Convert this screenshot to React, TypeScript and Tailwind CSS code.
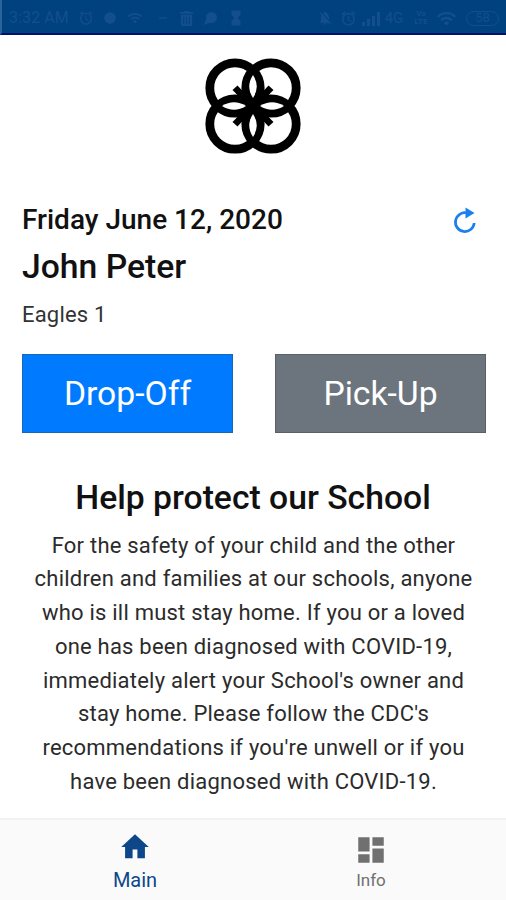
import React from 'react';
import { FaTrashAlt } from 'react-icons/fa';
import {
  MdAccessAlarm,
  MdBrightness1,
  MdDashboard,
  MdHourglassFull,
  MdNotificationsOff,
  MdWifi,
} from 'react-icons/md';

const notice = [
  'For the safety of your child and the other',
  'children and families at our schools, anyone',
  'who is ill must stay home. If you or a loved',
  'one has been diagnosed with COVID-19,',
  "immediately alert your School's owner and",
  "stay home. Please follow the CDC's",
  "recommendations if you're unwell or if you",
  'have been diagnosed with COVID-19.',
];

function StatusBar() {
  return (
    <div className="flex h-[35px] shrink-0 items-center justify-between border-b-2 border-l-2 border-b-[#00106b] border-l-[#2a649b] bg-[#00427f] pl-[7px] pr-[7px] pt-[3px] text-[#134f8c]">
      <div className="flex items-center">
        <span className="w-[69px] whitespace-nowrap text-[16px] tracking-[0.1px]">3:32 AM</span>
        <MdAccessAlarm className="h-4 w-4" />
        <MdBrightness1 className="ml-[9px] h-3.5 w-3.5" />
        <MdWifi className="ml-[10px] h-4 w-4" />
        <span className="ml-4 h-[2px] w-2 bg-[#0b4a87]" />
        <FaTrashAlt className="ml-[12px] h-[15px] w-[15px]" />
        <svg className="ml-[9px] h-[15px] w-[15px]" viewBox="0 0 15 15" fill="currentColor">
          <circle cx="8.5" cy="6.5" r="5.5" />
          <path d="M3 8L1 14L8 11Z" />
        </svg>
        <MdHourglassFull className="ml-[9px] h-[18px] w-[18px]" />
      </div>
      <div className="flex items-center">
        <MdNotificationsOff className="h-4 w-4" />
        <MdAccessAlarm className="ml-[7px] h-[17px] w-[17px]" />
        <svg className="ml-[4px] h-[15px] w-[20px]" viewBox="0 0 20 15" fill="currentColor">
          <path d="M1 11h3v4H1zM6 8h3v7H6zM11 5h3v10h-3zM16 1h3v14h-3z" />
        </svg>
        <span className="w-[26px] text-center text-[15px]">4G</span>
        <span className="ml-1 flex w-5 flex-col items-center text-[8px] font-bold">
          <span className="h-2 leading-[8px]">Vo</span>
          <span className="h-2 leading-[8px]">LTE</span>
        </span>
        <MdWifi className="ml-[5px] h-[21px] w-[21px]" />
        <span className="ml-[9px] flex h-[15px] w-[33px] items-center justify-center rounded-full border border-[#134f8c] text-[13px]">
          58
        </span>
      </div>
    </div>
  );
}

function Logo() {
  return (
    <svg className="h-24 w-24" viewBox="0 0 96 96" fill="none" stroke="#000">
      <g strokeWidth="8.8">
        <circle cx="30" cy="30" r="25.2" />
        <circle cx="66" cy="30" r="25.2" />
        <circle cx="30" cy="66" r="25.2" />
        <circle cx="66" cy="66" r="25.2" />
      </g>
      <path d="M33 33L63 63M63 33L33 63" strokeWidth="6" />
      <g fill="#000" stroke="none">
        <path d="M35.5 35.5H60.5V60.5H35.5Z" />
        <path d="M27.5 32L32.5 27.5L38 33.5L33.5 38Z" />
        <path d="M68.5 32L63.5 27.5L58 33.5L62.5 38Z" />
        <path d="M27.5 64L32.5 68.5L38 62.5L33.5 58Z" />
        <path d="M68.5 64L63.5 68.5L58 62.5L62.5 58Z" />
      </g>
      <g fill="#fff" stroke="none">
        <path d="M48 17Q55.5 28.5 48 40Q40.5 28.5 48 17Z" />
        <path d="M48 56Q55.5 67.5 48 79Q40.5 67.5 48 56Z" />
        <path d="M17 48Q29 40.5 41 48Q29 55.5 17 48Z" />
        <path d="M55 48Q67 40.5 79 48Q67 55.5 55 48Z" />
      </g>
    </svg>
  );
}

function RefreshIcon() {
  return (
    <svg className="h-7 w-7" viewBox="0 0 28 28" fill="none">
      <path d="M16 7A9.4 9.4 0 1 0 23.2 17" stroke="#1b80ee" strokeWidth="2.7" />
      <path d="M14.5 1.5L23.5 7L14.5 12.5Z" fill="#1b80ee" />
    </svg>
  );
}

function HomeIcon() {
  return (
    <svg className="h-[34px] w-[34px]" viewBox="0 0 24 24" fill="currentColor">
      <path d="M12 3L2.3 12H5v8h5.3v-6.3h3.4V20H19v-8h2.7Z" />
    </svg>
  );
}

export default function App() {
  return (
    <div className="flex h-[900px] w-[506px] flex-col overflow-hidden bg-white font-['Roboto',sans-serif] text-[#111]">
      <StatusBar />

      <main className="flex flex-1 flex-col pt-[23px]">
        <div className="flex justify-center">
          <Logo />
        </div>

        <div className="mt-[48px] flex h-9 items-center justify-between pl-[22px] pr-[27px]">
          <h2 className="whitespace-nowrap text-[28px] font-medium">Friday June 12, 2020</h2>
          <RefreshIcon />
        </div>
        <h1 className="mt-[9px] h-10 pl-[22px] text-[33.7px] font-medium leading-10">John Peter</h1>
        <p className="mt-[14px] h-7 pl-[22px] text-[22px] leading-7 tracking-[0.2px] text-[#333]">Eagles 1</p>

        <div className="mt-[25px] grid grid-cols-2 gap-[42px] pl-[22px] pr-5">
          <button className="h-[79px] border border-[#1767b8] bg-[#007bff] pt-[2px] text-[33.7px] text-white">Drop-Off</button>
          <button className="h-[79px] border border-[#596168] bg-[#6c757d] pt-[2px] text-[33.7px] text-white">Pick-Up</button>
        </div>

        <section className="mt-[45px] text-center">
          <h2 className="text-[33.7px] font-medium leading-10">Help protect our School</h2>
          <p className="mt-[10.5px] pl-px text-[22px] leading-[33.75px] tracking-[0.22px] text-[#2b2b2b]">
            {notice.map((line) => (
              <span key={line} className="block whitespace-nowrap">{line}</span>
            ))}
          </p>
        </section>
      </main>

      <nav className="grid h-[82px] shrink-0 grid-cols-2 border-t-2 border-[#f3f3f3] bg-[#fafafa]">
        <a className="flex flex-col items-center pl-[17px] pt-[10px] text-[#0d478a]">
          <HomeIcon />
          <span className="mt-[4px] text-[20px] leading-6">Main</span>
        </a>
        <a className="flex flex-col items-center pr-[17px] pt-[13px] text-[#707070]">
          <MdDashboard className="h-[34px] w-[34px]" />
          <span className="mt-[1px] text-[17px] leading-6">Info</span>
        </a>
      </nav>
    </div>
  );
}
